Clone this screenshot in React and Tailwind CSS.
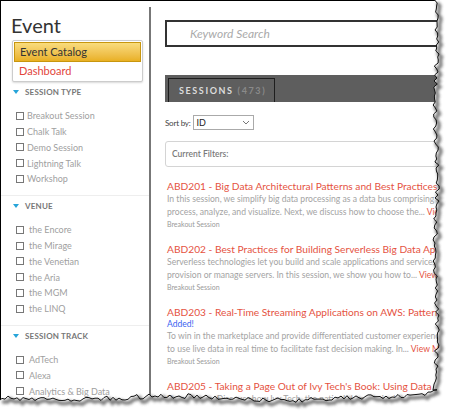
import React from 'react';

const SESSION_TYPES = ['Breakout Session', 'Chalk Talk', 'Demo Session', 'Lightning Talk', 'Workshop'];
const VENUES = ['the Encore', 'the Mirage', 'the Venetian', 'the Aria', 'the MGM', 'the LINQ'];
const TRACKS = ['AdTech', 'Alexa', 'Analytics & Big Data', 'Architecture'];

const SESSIONS = [
  {
    title: 'ABD201 - Big Data Architectural Patterns and Best Practices on AWS',
    lines: [
      'In this session, we simplify big data processing as a data bus comprising various stages: collect, store,',
      'process, analyze, and visualize. Next, we discuss how to choose the...',
    ],
  },
  {
    title: 'ABD202 - Best Practices for Building Serverless Big Data Applications',
    lines: [
      'Serverless technologies let you build and scale applications and services rapidly without the need to',
      'provision or manage servers. In this session, we show you how to...',
    ],
  },
  {
    title: 'ABD203 - Real-Time Streaming Applications on AWS: Patterns and Use Cases',
    added: true,
    lines: [
      'To win in the marketplace and provide differentiated customer experiences, businesses need to be able',
      'to use live data in real time to facilitate fast decision making. In...',
    ],
  },
  {
    title: "ABD205 - Taking a Page Out of Ivy Tech's Book: Using Data for Student Success",
    lines: ["Data speaks. Discover how Ivy Tech, the nation's largest singly accredited community college, uses"],
  },
];

const rnd = (i, seed) => {
  const v = Math.sin(i * 12.9898 + seed * 78.233) * 43758.5453;
  return v - Math.floor(v);
};

// torn paper edge, right side then bottom
const buildEdge = () => {
  const pts = [];
  for (let y = 0, i = 0; y <= 392; y += 3, i++) {
    const x = 436 + (rnd(i, 1) - 0.5) * 4.5 + Math.sin(y / 23) * 1.2;
    pts.push([x, y]);
  }
  for (let x = 437, i = 0; x >= 0; x -= 3, i++) {
    const y = 398 + (rnd(i, 2) - 0.5) * 5 + Math.sin(x / 37) * 2 - (x > 400 ? (x - 400) * 0.12 : 0);
    pts.push([x, y]);
  }
  pts.push([0, 400]);
  return pts;
};

const TornEdge = () => {
  const pts = buildEdge();
  const line = pts.map(([x, y], i) => `${i ? 'L' : 'M'}${x.toFixed(1)} ${y.toFixed(1)}`).join(' ');
  const outside = `${line} L0 413 L450 413 L450 0 Z`;
  return (
    <svg className="pointer-events-none absolute inset-0" width="450" height="413" viewBox="0 0 450 413">
      <defs>
        <filter id="blur" x="-10%" y="-10%" width="120%" height="120%">
          <feGaussianBlur stdDeviation="1.4" />
        </filter>
      </defs>
      <path d={outside} fill="#fff" />
      <path d={line} fill="none" stroke="#555" strokeWidth="3.5" opacity="0.8" transform="translate(2.5 3)" filter="url(#blur)" />
      <path d={line} fill="none" stroke="#111" strokeWidth="1" />
    </svg>
  );
};

const Box = () => <span className="h-[8px] w-[8px] shrink-0 border border-[#777] bg-white" />;

const Group = ({ label, items, gap }) => (
  <div>
    <div className="flex h-[20px] items-center gap-[6px] pl-[12px]">
      <span className="h-0 w-0 border-l-[3px] border-r-[3px] border-t-[4px] border-l-transparent border-r-transparent border-t-[#26a4d9]" />
      <span className="text-[8px] font-bold tracking-[0.2px] text-[#777]">{label}</span>
    </div>
    <div className="pt-[6px]">
      {items.map((t) => (
        <div key={t} className={`flex h-[15.8px] items-center pl-[15px] ${gap}`}>
          <Box />
          <span className="whitespace-nowrap text-[9px] text-[#a0a0a0]">{t}</span>
        </div>
      ))}
    </div>
  </div>
);

const Sidebar = () => (
  <div className="w-[148px] shrink-0">
    <div className="pl-[10px] pt-[12px] text-[20px] leading-[24px] text-[#333]">Event</div>
    <div className="ml-[11px] mr-[6px] mt-[3px] rounded-[2px] border border-[#ccc] bg-white p-[1px] shadow-[0_1px_2px_rgba(0,0,0,0.15)]">
      <div className="flex h-[20px] items-center border border-[#c8960e] bg-gradient-to-b from-[#f9dc7c] to-[#e9b021] pl-[5px] text-[11px] text-[#333]">
        Event Catalog
      </div>
      <div className="flex h-[18px] items-center pl-[5px] text-[11px] text-[#e2453b]">Dashboard</div>
    </div>
    <Group label="SESSION TYPE" items={SESSION_TYPES} gap="gap-[3px]" />
    <div className="mt-[8px] border-t border-[#eee]">
      <Group label="VENUE" items={VENUES} gap="gap-[5px]" />
    </div>
    <div className="mt-[8px] border-t border-[#eee]">
      <Group label="SESSION TRACK" items={TRACKS} gap="gap-[5px]" />
    </div>
  </div>
);

const Session = ({ s }) => (
  <div className="mb-[13px]">
    <div className="whitespace-nowrap text-[10.2px] leading-[14px] text-[#e5533f]">{s.title}</div>
    {s.added ? <div className="text-[8.5px] leading-[11px] text-[#3a5ff0]">Added!</div> : null}
    {s.lines.map((l, i) => (
      <div key={i} className="whitespace-nowrap text-[8.6px] leading-[13px] text-[#a3a3a3]">
        {l}
        {i === s.lines.length - 1 && s.lines.length > 1 ? <span className="text-[#e5533f]"> View More</span> : null}
      </div>
    ))}
    <div className="text-[7px] leading-[10px] text-[#9a9a9a]">Breakout Session</div>
  </div>
);

const Main = () => (
  <div className="min-w-0 flex-1 overflow-hidden pl-[14px]">
    <div className="mt-[19px] flex h-[27px] w-[320px] items-center border-2 border-[#333] pl-[23px] text-[12px] italic text-[#aaa]">
      Keyword Search
    </div>
    <div className="mt-[28px] flex h-[27px] w-[320px] items-end bg-[#5e5e5e] pl-[3px]">
      <div className="flex h-[24px] w-[107px] items-center border-[1.5px] border-b-0 border-[#1e1e1e] pl-[10px] text-[9px] font-bold tracking-[1.6px]">
        <span className="text-[#dcdcdc]">SESSIONS</span>
        <span className="ml-[4px] text-[#8a8a8a]">(473)</span>
      </div>
    </div>
    <div className="mt-[13px] flex items-center gap-[2px]">
      <span className="text-[8px] tracking-[-0.2px] text-[#444]">Sort by:</span>
      <div className="flex h-[15px] w-[61px] items-center justify-between border border-[#aaa] px-[3px]">
        <span className="text-[9px] text-[#222]">ID</span>
        <svg width="8" height="5" viewBox="0 0 8 5">
          <path d="M1 1l3 3 3-3" fill="none" stroke="#777" strokeWidth="1" />
        </svg>
      </div>
    </div>
    <div className="mt-[11px] flex h-[26px] w-[320px] items-center rounded-[3px] border border-[#d4d4d4] pl-[6px] text-[8.5px] font-semibold text-[#7a7a7a]">
      Current Filters:
    </div>
    <div className="pl-[2px] pt-[12px]">
      {SESSIONS.map((s) => (
        <Session key={s.title} s={s} />
      ))}
    </div>
  </div>
);

export default function App() {
  return (
    <div className="relative h-[413px] w-[450px] overflow-hidden bg-white font-['Lato','Open_Sans',sans-serif]">
      <div className="flex h-full border-l border-t border-black">
        <Sidebar />
        <div className="mt-[6px] w-[2px] shrink-0 bg-[#777]" />
        <Main />
      </div>
      <TornEdge />
    </div>
  );
}
